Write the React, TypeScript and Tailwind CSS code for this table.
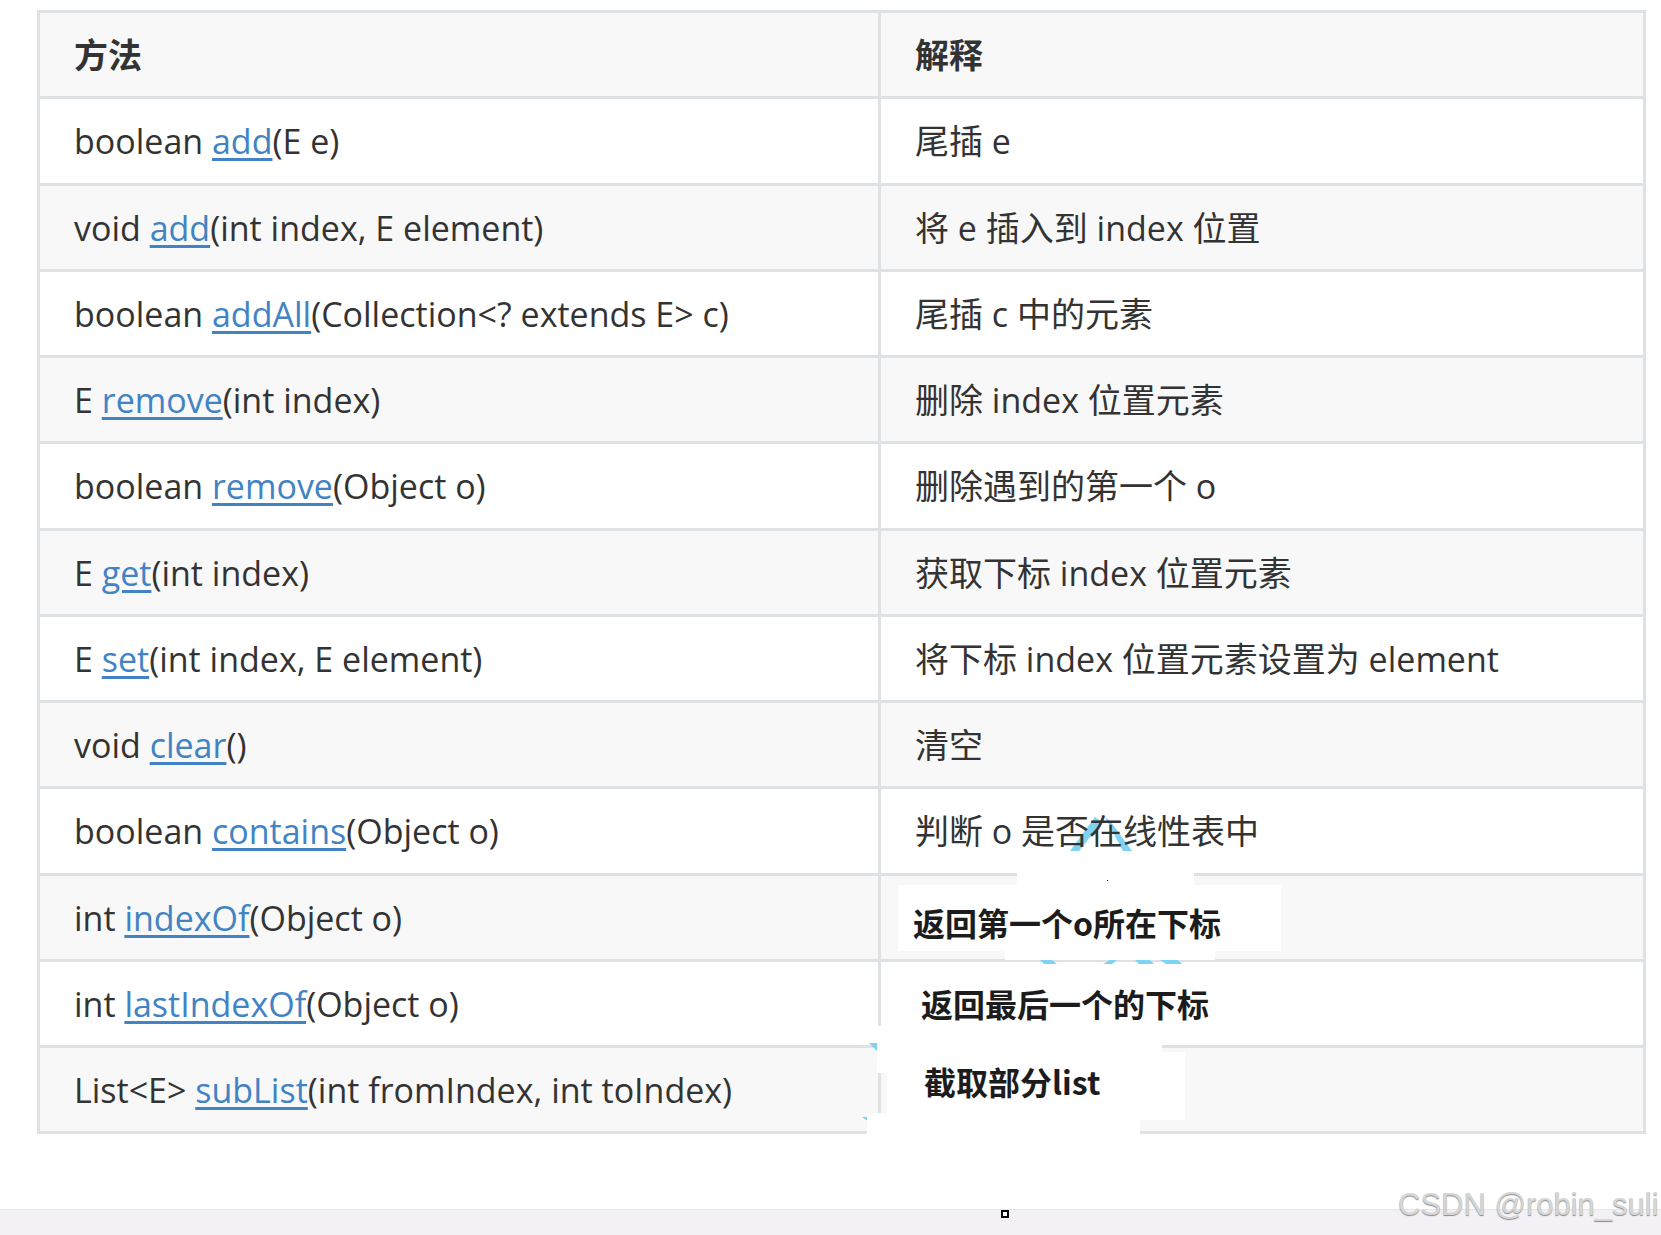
import React from "react";

const rows: { pre: string; link: string; post: string; desc: string }[] = [
  { pre: "boolean ", link: "add", post: "(E e)", desc: "尾插 e" },
  { pre: "void ", link: "add", post: "(int index, E element)", desc: "将 e 插入到 index 位置" },
  { pre: "boolean ", link: "addAll", post: "(Collection<? extends E> c)", desc: "尾插 c 中的元素" },
  { pre: "E ", link: "remove", post: "(int index)", desc: "删除 index 位置元素" },
  { pre: "boolean ", link: "remove", post: "(Object o)", desc: "删除遇到的第一个 o" },
  { pre: "E ", link: "get", post: "(int index)", desc: "获取下标 index 位置元素" },
  { pre: "E ", link: "set", post: "(int index, E element)", desc: "将下标 index 位置元素设置为 element" },
  { pre: "void ", link: "clear", post: "()", desc: "清空" },
  { pre: "boolean ", link: "contains", post: "(Object o)", desc: "判断 o 是否在线性表中" },
  { pre: "int ", link: "indexOf", post: "(Object o)", desc: "" },
  { pre: "int ", link: "lastIndexOf", post: "(Object o)", desc: "" },
  { pre: "List<E> ", link: "subList", post: "(int fromIndex, int toIndex)", desc: "" },
];

const font = "font-['Open_Sans','Noto_Sans_CJK_SC',sans-serif]";

export default function App() {
  return (
    <div className={`relative w-[1661px] h-[1235px] overflow-hidden bg-white ${font} text-[#333]`}>
      <div className="pt-[10px] pl-[37px]">
        <div className="grid grid-cols-[841px_765px] w-[1609px] border-l-[3px] border-t-[3px] border-[#dfe2e5]">
          <div className="h-[86.25px] bg-[#f8f8f8] border-r-[3px] border-b-[3px] border-[#dfe2e5] flex items-center pl-[34px] pt-[2px] text-[34px] font-bold">
            <span className="relative z-10">方法</span>
          </div>
          <div className="h-[86.25px] bg-[#f8f8f8] border-r-[3px] border-b-[3px] border-[#dfe2e5] flex items-center pl-[34px] pt-[2px] text-[34px] font-bold">
            <span className="relative z-10">解释</span>
          </div>
          {rows.map((r, i) => {
            const bg = i % 2 === 0 ? "bg-white" : "bg-[#f8f8f8]";
            return (
              <React.Fragment key={i}>
                <div className={`h-[86.25px] ${bg} border-r-[3px] border-b-[3px] border-[#dfe2e5] flex items-center pl-[34px] pt-[2px] text-[34px] whitespace-nowrap`}>
                  <span className="relative z-10">
                    {r.pre}
                    <span className="text-[#4183c4] underline decoration-[3px] underline-offset-[4px]">{r.link}</span>
                    {r.post}
                  </span>
                </div>
                <div className={`h-[86.25px] ${bg} border-r-[3px] border-b-[3px] border-[#dfe2e5] flex items-center pl-[34px] pt-[2px] text-[34px] whitespace-nowrap`}>
                  <span className="relative z-10">{r.desc}</span>
                </div>
              </React.Fragment>
            );
          })}
        </div>
      </div>

      {/* pasted patches over the last three rows */}
      <svg className="absolute left-0 top-0" width="1661" height="1235" viewBox="0 0 1661 1235">
        <g fill="#7fd3f2">
          <polygon points="1070,851 1079,851 1102,822 1095,817" />
          <polygon points="1105,817 1111,822 1132,851 1123,851" />
          <polygon points="1040,960 1052,960 1057,964 1044,964" />
          <polygon points="1103,964 1110,960 1117,960 1112,964" />
          <polygon points="1135,960 1150,960 1154,964 1139,964" />
          <polygon points="1160,960 1178,960 1182,964 1166,964" />
          <polygon points="869,1043 877,1043 877,1051" />
          <polygon points="862,1117 869,1117 869,1122" />
        </g>
        <g fill="#ffffff">
          <rect x="1017" y="873" width="177" height="13" />
          <rect x="898" y="885" width="383" height="66" />
          <rect x="1005" y="950" width="210" height="10" />
          <rect x="877" y="1026" width="285" height="47" />
          <rect x="887" y="1052" width="298" height="68" />
          <rect x="867" y="1113" width="273" height="22" />
        </g>
        <rect x="1107" y="880" width="1" height="1" fill="#000" />
      </svg>

      <div className="absolute left-[913px] top-[906px] text-[32px] font-bold text-[#1c1c1c] leading-none font-['Noto_Sans_CJK_SC',sans-serif]">
        返回第一个o所在下标
      </div>
      <div className="absolute left-[921px] top-[987px] text-[32px] font-bold text-[#1c1c1c] leading-none font-['Noto_Sans_CJK_SC',sans-serif]">
        返回最后一个的下标
      </div>
      <div className="absolute left-[924px] top-[1065px] text-[32px] font-bold text-[#1c1c1c] leading-none font-['Noto_Sans_CJK_SC',sans-serif]">
        截取部分list
      </div>

      {/* bottom band */}
      <div className="absolute left-0 right-0 top-[1209px] bottom-0 bg-[#f4f1f6] border-t border-[#e6e4ea]" />
      <div className="absolute left-[1001px] top-[1210px] w-[8px] h-[8px] border-2 border-black bg-white" />
      <div className="absolute left-[1398px] top-[1189px] whitespace-nowrap text-[31px] leading-none text-[#d6d6d6] font-['Liberation_Sans',sans-serif] [text-shadow:0_1px_1px_#8a8a8a]">
        CSDN @robin_suli
      </div>
    </div>
  );
}
